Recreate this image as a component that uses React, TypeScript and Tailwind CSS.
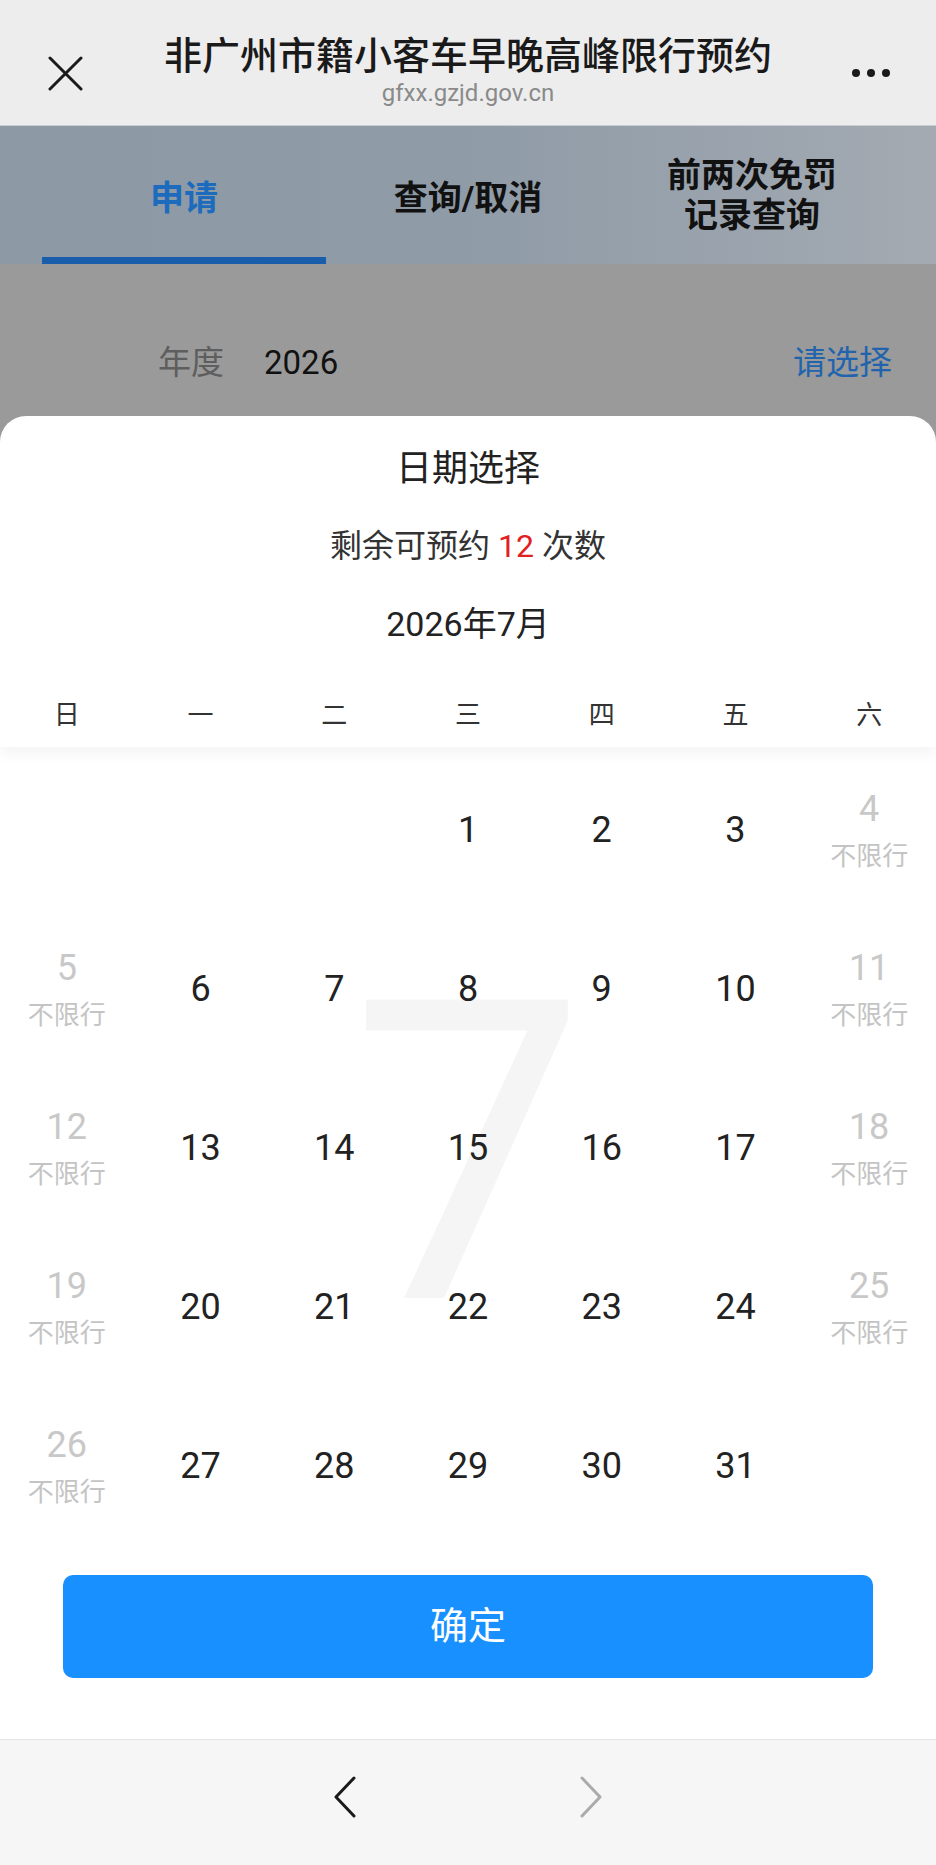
import React from "react";

const font = { fontFamily: '"Roboto", "Noto Sans CJK SC", sans-serif' };

type Day = { d: number; limited?: boolean } | null;

const weekdays = ["日", "一", "二", "三", "四", "五", "六"];

function buildDays(): Day[] {
  const days: Day[] = [null, null, null];
  for (let d = 1; d <= 31; d++) {
    const col = (d + 2) % 7;
    days.push({ d, limited: col === 0 || col === 6 });
  }
  days.push(null);
  return days;
}

export default function App() {
  const days = buildDays();

  return (
    <div className="flex h-[1865px] w-[936px] flex-col overflow-hidden bg-[#9a9a9a]" style={font}>
      {/* Nav bar */}
      <div className="relative flex h-[125px] shrink-0 flex-col items-center bg-[#ededed]">
        <svg className="absolute left-[48px] top-[56px] h-[35px] w-[35px]" viewBox="0 0 35 35">
          <path d="M2 2L33 33M33 2L2 33" stroke="#1a1a1a" strokeWidth="3" strokeLinecap="round" />
        </svg>
        <div className="mt-[33px] text-[38px] font-medium leading-[46px] text-[#1a1a1a]">
          非广州市籍小客车早晚高峰限行预约
        </div>
        <div className="text-[24px] leading-[28px] text-[#8a8a8a]">gfxx.gzjd.gov.cn</div>
        <div className="absolute left-[852px] top-[69px] flex gap-[7px]">
          <span className="h-[8px] w-[8px] rounded-full bg-[#1a1a1a]" />
          <span className="h-[8px] w-[8px] rounded-full bg-[#1a1a1a]" />
          <span className="h-[8px] w-[8px] rounded-full bg-[#1a1a1a]" />
        </div>
      </div>

      {/* Tabs (dimmed) */}
      <div className="grid h-[139px] shrink-0 grid-cols-3 border-t border-[#c9ced3] bg-gradient-to-r from-[#8d99a5] via-[#8f9ba7] to-[#a3aab2] px-[42px]">
        <div className="flex flex-col items-center justify-between">
          <div className="mt-[50px] text-[34px] font-bold leading-[44px] text-[#1d6bbd]">申请</div>
          <div className="h-[7px] w-full bg-[#1a5eab]" />
        </div>
        <div className="flex items-start justify-center">
          <div className="mt-[50px] text-[34px] font-bold leading-[44px] text-[#111]">查询/取消</div>
        </div>
        <div className="flex items-start justify-center">
          <div className="mt-[29px] text-center text-[34px] font-bold leading-[40px] text-[#111]">
            前两次免罚
            <br />
            记录查询
          </div>
        </div>
      </div>

      {/* Year row (dimmed) */}
      <div className="flex h-[152px] shrink-0 items-start px-[44px] pt-[76px] text-[33px] leading-[46px]">
        <span className="ml-[114px] text-[#5e5e5e]">年度</span>
        <span className="ml-[40px] text-[#111]">2026</span>
        <span className="ml-auto text-[#2164ad]">请选择</span>
      </div>

      {/* Date sheet */}
      <div className="flex flex-1 flex-col rounded-t-[26px] bg-white">
        <div className="relative z-10 flex flex-col items-center pt-[30px] pb-[12px] shadow-[0_8px_12px_rgba(0,0,0,0.04)]">
          <div className="text-[36px] leading-[46px] text-[#222]">日期选择</div>
          <div className="mt-[31px] text-[32px] leading-[46px] text-[#333]">
            剩余可预约 <span className="text-[#e0211f]">12</span> 次数
          </div>
          <div className="mt-[32px] text-[34px] leading-[46px] text-[#222]">2026年7月</div>
          <div className="mt-[48px] grid w-full grid-cols-7 text-[26px] leading-[40px] text-[#333]">
            {weekdays.map((w) => (
              <div key={w} className="text-center">
                {w}
              </div>
            ))}
          </div>
        </div>

        <div className="relative grid grid-cols-7 pt-[3px]">
          <div className="pointer-events-none absolute inset-0 flex items-center justify-center pt-[18px]" aria-hidden="true">
            <span className="text-[420px] leading-none text-[#f5f5f5]">7</span>
          </div>
          {days.map((day, i) => (
            <div key={i} className="relative flex h-[159px] flex-col items-center justify-center">
              {day &&
                (day.limited ? (
                  <>
                    <span className="text-[36px] leading-[40px] text-[#c8c8c8]">{day.d}</span>
                    <span className="mt-[12px] text-[26px] leading-[30px] text-[#c4c4c4]">不限行</span>
                  </>
                ) : (
                  <span className="text-[36px] leading-[40px] text-[#222]">{day.d}</span>
                ))}
            </div>
          ))}
        </div>

        <div className="px-[63px] pt-[30px]">
          <button className="flex h-[103px] w-full items-center justify-center rounded-[10px] bg-[#1890ff] text-[38px] text-white">
            确定
          </button>
        </div>
      </div>

      {/* Bottom browser bar */}
      <div className="flex h-[126px] shrink-0 items-start justify-center gap-[222px] border-t border-[#e6e6e6] bg-[#f6f6f6] pt-[36px]">
        <svg className="h-[42px] w-[24px]" viewBox="0 0 24 42">
          <path d="M21 2L3 21L21 40" fill="none" stroke="#1a1a1a" strokeWidth="3" strokeLinecap="round" strokeLinejoin="round" />
        </svg>
        <svg className="h-[42px] w-[24px]" viewBox="0 0 24 42">
          <path d="M3 2L21 21L3 40" fill="none" stroke="#ababab" strokeWidth="3" strokeLinecap="round" strokeLinejoin="round" />
        </svg>
      </div>
    </div>
  );
}
